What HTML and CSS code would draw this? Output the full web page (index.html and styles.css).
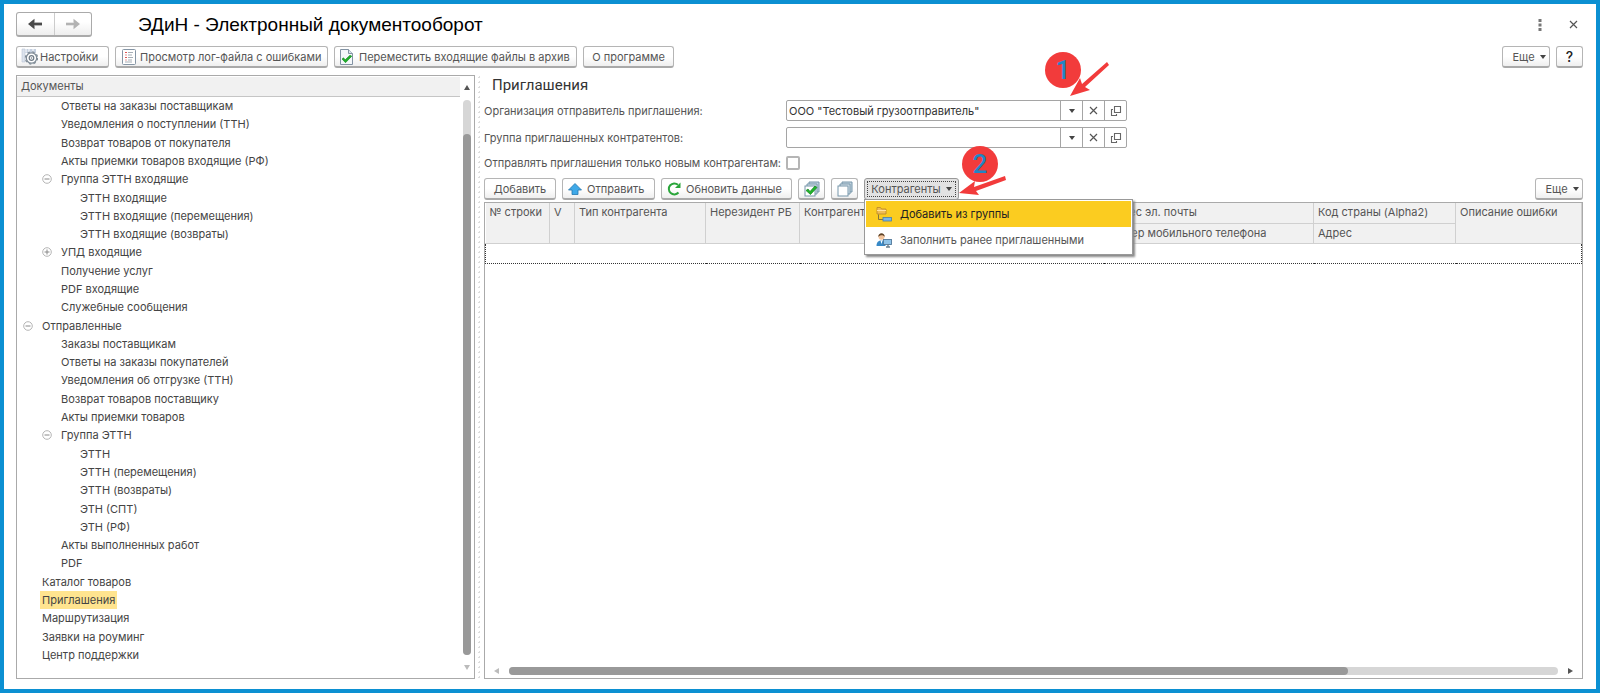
FILE: index.html
```html
<!DOCTYPE html>
<html lang="ru">
<head>
<meta charset="utf-8">
<title>ЭДиН - Электронный документооборот</title>
<link rel="stylesheet" href="styles.css">
</head>
<body>
<svg class="defs" width="0" height="0" aria-hidden="true">
  <symbol id="close" viewBox="0 0 9 9"><path d="M1 1l7 7M8 1l-7 7" fill="none" stroke="#555" stroke-width="1.2"/></symbol>
  <symbol id="open" viewBox="0 0 12 12"><path d="M4.500 1.500h6v6h-6zM3 4.500H1.500v6h5V9" fill="none" stroke="#666" stroke-width="1.1"/></symbol>
  <symbol id="minus" viewBox="0 0 10 10"><circle cx="5" cy="5" r="4.300" fill="#fff" stroke="#b5b5b5"/><path d="M2.500 5h5" stroke="#888"/></symbol>
  <symbol id="plus" viewBox="0 0 10 10"><circle cx="5" cy="5" r="4.300" fill="#fff" stroke="#b5b5b5"/><path d="M2.500 5h5M5 2.500v5" stroke="#888"/></symbol>
  <symbol id="caret" viewBox="0 0 6 4"><path d="M0 0h6L3 4z" fill="#444"/></symbol>
</svg>
<div class="window">
  <header class="titlebar">
    <div class="nav">
      <button type="button" aria-label="Назад"><svg width="16" height="12" viewBox="0 0 16 12"><path d="M15 6H4" stroke="#4a4a4a" stroke-width="2.800"/><path d="M7.500 .8L1 6l6.500 5.200V7.500L5 6l2.500-1.500z" fill="#4a4a4a"/></svg></button>
      <button type="button" aria-label="Вперед"><svg width="16" height="12" viewBox="0 0 16 12"><path d="M1 6h11" stroke="#b3b3b3" stroke-width="2.600"/><path d="M8.500 .8L15 6l-6.500 5.200V7.500L11 6 8.500 4.500z" fill="#b3b3b3"/></svg></button>
    </div>
    <h1>ЭДиН - Электронный документооборот</h1>
    <div class="winctl">
      <button type="button" aria-label="Меню"><svg width="4" height="12" viewBox="0 0 4 12"><path d="M.5 0h3v3h-3zM.5 4.500h3v3h-3zM.5 9h3v3h-3z" fill="#777"/></svg></button>
      <button type="button" aria-label="Закрыть"><svg width="9" height="9"><use href="#close"/></svg></button>
    </div>
  </header>

  <div class="toolbar main-tools">
    <button type="button" class="btn icon-btn settings">
      <svg width="17" height="17" viewBox="0 0 17 17"><path d="M1 1h14v4H1z" fill="#c5d0e0"/><path d="M1 1h3v13H1z" fill="#dce3ed" stroke="#b8c4d4" stroke-width=".6"/><path d="M5 .5v4M8 .5v4M12 .5v4" stroke="#fff"/><circle cx="10.500" cy="10" r="5.200" fill="#fff" stroke="#7f8b96" stroke-width="1.300"/><circle cx="10.500" cy="10" r="6.100" fill="none" stroke="#7f8b96" stroke-width="1.200" stroke-dasharray="2.400 2.390"/><circle cx="10.500" cy="10" r="2.300" fill="none" stroke="#6f7b86" stroke-width="1.200"/><circle cx="10.500" cy="10" r=".8" fill="#6f7b86"/></svg>
      Настройки</button>
    <button type="button" class="btn icon-btn log">
      <svg width="14" height="16" viewBox="0 0 14 16"><rect x=".5" y=".5" width="13" height="15" rx="1" fill="#fff" stroke="#8595a5"/><path d="M3 3.500h2M3 8.500h2" stroke="#e05555"/><path d="M3 6h2M3 11h2" stroke="#e59a9a"/><path d="M6 3.500h5M6 6h4M6 8.500h5M6 11h4M3 13h7" stroke="#a5adb5"/></svg>
      Просмотр лог-файла с ошибками</button>
    <button type="button" class="btn icon-btn move">
      <svg width="13" height="16" viewBox="0 0 13 16"><path d="M.5 .5h8l4 4v11H.5z" fill="#f4f7fa" stroke="#8292a3"/><path d="M8.500 .5v4h4" fill="#dbe3eb" stroke="#8292a3"/><path d="M2 10l1.500-1.200 1.700 2 4.800-4.600 1.800 1-6.300 6.500z" fill="#20ad2b" stroke="#138a1c" stroke-width=".6"/></svg>
      Переместить входящие файлы в архив</button>
    <button type="button" class="btn about">О программе</button>
    <span class="spacer"></span>
    <button type="button" class="btn more">Еще <svg width="6" height="4"><use href="#caret"/></svg></button>
    <button type="button" class="btn help">?</button>
  </div>

  <div class="workspace">
    <nav class="tree" aria-label="Документы">
      <div class="tree-body">
        <div class="tree-head">Документы</div>
        <ul>
          <li class="l2"><a href="#">Ответы на заказы поставщикам</a></li>
          <li class="l2"><a href="#">Уведомления о поступлении (ТТН)</a></li>
          <li class="l2"><a href="#">Возврат товаров от покупателя</a></li>
          <li class="l2"><a href="#">Акты приемки товаров входящие (РФ)</a></li>
          <li class="l2 node"><svg width="10" height="10"><use href="#minus"/></svg><a href="#">Группа ЭТТН входящие</a></li>
          <li class="l3"><a href="#">ЭТТН входящие</a></li>
          <li class="l3"><a href="#">ЭТТН входящие (перемещения)</a></li>
          <li class="l3"><a href="#">ЭТТН входящие (возвраты)</a></li>
          <li class="l2 node"><svg width="10" height="10"><use href="#plus"/></svg><a href="#">УПД входящие</a></li>
          <li class="l2"><a href="#">Получение услуг</a></li>
          <li class="l2"><a href="#">PDF входящие</a></li>
          <li class="l2"><a href="#">Служебные сообщения</a></li>
          <li class="l1 node"><svg width="10" height="10"><use href="#minus"/></svg><a href="#">Отправленные</a></li>
          <li class="l2"><a href="#">Заказы поставщикам</a></li>
          <li class="l2"><a href="#">Ответы на заказы покупателей</a></li>
          <li class="l2"><a href="#">Уведомления об отгрузке (ТТН)</a></li>
          <li class="l2"><a href="#">Возврат товаров поставщику</a></li>
          <li class="l2"><a href="#">Акты приемки товаров</a></li>
          <li class="l2 node"><svg width="10" height="10"><use href="#minus"/></svg><a href="#">Группа ЭТТН</a></li>
          <li class="l3"><a href="#">ЭТТН</a></li>
          <li class="l3"><a href="#">ЭТТН (перемещения)</a></li>
          <li class="l3"><a href="#">ЭТТН (возвраты)</a></li>
          <li class="l3"><a href="#">ЭТН (СПТ)</a></li>
          <li class="l3"><a href="#">ЭТН (РФ)</a></li>
          <li class="l2"><a href="#">Акты выполненных работ</a></li>
          <li class="l2"><a href="#">PDF</a></li>
          <li class="l1"><a href="#">Каталог товаров</a></li>
          <li class="l1"><a href="#" class="current">Приглашения</a></li>
          <li class="l1"><a href="#">Маршрутизация</a></li>
          <li class="l1"><a href="#">Заявки на роуминг</a></li>
          <li class="l1"><a href="#">Центр поддержки</a></li>
        </ul>
      </div>
      <div class="vscroll">
        <svg width="6" height="5" viewBox="0 0 6 5"><path d="M3 0l3 5H0z" fill="#555"/></svg>
        <div class="vtrack"><div class="vthumb"></div></div>
        <svg width="6" height="5" viewBox="0 0 6 5"><path d="M0 0h6L3 5z" fill="#bbb"/></svg>
      </div>
    </nav>
    <div class="splitter"></div>
    <main class="content">
      <h2>Приглашения</h2>
      <div class="field">
        <label for="org">Организация отправитель приглашения:</label>
        <div class="combo">
          <input id="org" type="text" value="ООО &quot;Тестовый грузоотправитель&quot;">
          <button type="button" aria-label="Выбрать"><svg width="6" height="4"><use href="#caret"/></svg></button>
          <button type="button" aria-label="Очистить"><svg width="9" height="9"><use href="#close"/></svg></button>
          <button type="button" aria-label="Открыть"><svg width="12" height="12"><use href="#open"/></svg></button>
          <span class="badge one">1</span>
          <svg class="arrow-one" width="40" height="36" viewBox="0 0 40 36"><path d="M0 34L10 16l2 6L37 0l2 3L15 25l5 3z" fill="#f23b3b"/></svg>
        </div>
      </div>
      <div class="field">
        <label for="group">Группа приглашенных контратентов:</label>
        <div class="combo">
          <input id="group" type="text">
          <button type="button" aria-label="Выбрать"><svg width="6" height="4"><use href="#caret"/></svg></button>
          <button type="button" aria-label="Очистить"><svg width="9" height="9"><use href="#close"/></svg></button>
          <button type="button" aria-label="Открыть"><svg width="12" height="12"><use href="#open"/></svg></button>
        </div>
      </div>
      <div class="field check">
        <label for="only">Отправлять приглашения только новым контрагентам:</label>
        <input id="only" type="checkbox">
      </div>
      <div class="toolbar">
        <button type="button" class="btn add">Добавить</button>
        <button type="button" class="btn icon-btn send">
          <svg width="14" height="12" viewBox="0 0 14 12"><path d="M7 .5L13.500 7H10v4.500H4V7H.5z" fill="#3fa9e8" stroke="#2577ae" stroke-width=".8"/></svg>
          Отправить</button>
        <button type="button" class="btn icon-btn refresh">
          <svg width="14" height="14" viewBox="0 0 14 14"><path d="M11.500 10.500A5.500 5.500 0 1 1 11 2.800" fill="none" stroke="#2aa63b" stroke-width="2"/><path d="M13.500 .5v5.500H8z" fill="#2aa63b"/></svg>
          Обновить данные</button>
        <button type="button" class="btn square" aria-label="Отметить все"><svg width="16" height="16" viewBox="0 0 16 16"><path d="M5 4V1h10v10h-3" fill="#c2d3df" stroke="#7696aa"/><path d="M3 5V3h10v10h-2" fill="#dce7ee" stroke="#7696aa"/><rect x="1" y="5" width="10" height="10" fill="#fff" stroke="#7696aa"/><path d="M2 9.500l2-1.500 2 2.500L11 5l2 1.500-6.500 7z" fill="#20b32b" stroke="#12841c" stroke-width=".7"/></svg></button>
        <button type="button" class="btn square" aria-label="Снять отметки"><svg width="16" height="16" viewBox="0 0 16 16"><path d="M5 4V1h10v10h-3" fill="#c2d3df" stroke="#7696aa"/><path d="M3 5V3h10v10h-2" fill="#dce7ee" stroke="#7696aa"/><rect x="1" y="5" width="10" height="10" fill="#fff" stroke="#7696aa"/></svg></button>
        <div class="dropdown">
          <button type="button" class="btn pressed" aria-expanded="true"><span>Контрагенты</span><svg width="6" height="4"><use href="#caret"/></svg></button>
          <div class="menu">
            <button type="button" class="active"><svg width="16" height="16" viewBox="0 0 16 16"><path d="M1 8V1.500h3.500l1 1.500H10v5z" fill="#f0bd55" stroke="#b88528" stroke-width=".8"/><path d="M1 4.500h9" stroke="#ffe2a0"/><path d="M2.500 8.500v5H7" fill="none" stroke="#83733d"/><rect x="7" y="11.500" width="8.500" height="3.500" fill="#79b5e6" stroke="#4a7ea9" stroke-width=".8"/></svg>Добавить из группы</button>
            <button type="button"><svg width="16" height="16" viewBox="0 0 16 16"><path d="M.5 14c0-4 2-5.500 5-5.500s4 1.500 4 5.500z" fill="#3889c7"/><path d="M4.500 8.500h2L5.500 12z" fill="#fff"/><circle cx="5.500" cy="4.800" r="3" fill="#f2c49c"/><path d="M2.300 5C2 0 9 0 8.700 5 7.500 2.800 4 2.800 2.300 5z" fill="#5f4328"/><rect x="7.500" y="7.500" width="8" height="5" fill="#8fc3e8" stroke="#52799a" stroke-width=".9"/><path d="M10 15h4M12 12.500V15" stroke="#6b7f8e" stroke-width="1.400"/></svg>Заполнить ранее приглашенными</button>
          </div>
          <span class="badge two">2</span>
          <svg class="arrow-two" width="48" height="20" viewBox="0 0 48 20"><path d="M0 17L16 5l-1 6L46 0l1 4L17 15l3 4z" fill="#f23b3b"/></svg>
        </div>
        <span class="spacer"></span>
        <button type="button" class="btn more">Еще <svg width="6" height="4"><use href="#caret"/></svg></button>
      </div>
      <div class="grid">
        <table>
          <colgroup><col class="c-num"><col class="c-v"><col class="c-type"><col class="c-res"><col><col class="c-mail"><col class="c-code"><col class="c-err"></colgroup>
          <thead>
            <tr><th rowspan="2">№ строки</th><th rowspan="2">V</th><th rowspan="2">Тип контрагента</th><th rowspan="2">Нерезидент РБ</th><th rowspan="2">Контрагент</th><th>Адрес эл. почты</th><th>Код страны (Alpha2)</th><th rowspan="2">Описание ошибки</th></tr>
            <tr><th>Номер мобильного телефона</th><th>Адрес</th></tr>
          </thead>
          <tbody><tr><td colspan="8"></td></tr></tbody>
        </table>
        <div class="hscroll">
          <svg width="5" height="6" viewBox="0 0 5 6"><path d="M5 0v6L0 3z" fill="#bbb"/></svg>
          <div class="htrack"><div class="hthumb"></div></div>
          <svg width="5" height="6" viewBox="0 0 5 6"><path d="M0 0v6l5-3z" fill="#555"/></svg>
        </div>
      </div>
    </main>
  </div>
</div>
</body>
</html>
```
FILE: styles.css
```css
* { box-sizing: border-box; }
body { margin: 0; font-family: Inter, Roboto, sans-serif; font-size: 11px; line-height: 14px; color: #555; background: #fff; }
button, input { font: inherit; color: inherit; margin: 0; }
button { padding: 0; border: 0; background: none; cursor: pointer; }
svg { display: block; flex: none; }
.defs { position: absolute; }
h1, h2, ul { margin: 0; padding: 0; }

.window { min-height: 100vh; display: flex; flex-direction: column; border: 4px solid #0c90d2; padding: 8px 13px 10px 12px; }
.titlebar { display: flex; align-items: center; height: 25px; }
.nav { display: flex; width: 76px; height: 25px; border: 1px solid #aaa; border-bottom: 2px solid #aaa; border-radius: 3px; background: linear-gradient(#fff 40%, #eee); }
.nav button { flex: 1; display: flex; align-items: center; justify-content: center; }
.nav button + button { border-left: 1px solid #ccc; }
h1 { margin-left: 46px; font: 400 19px/24px "Liberation Sans", Arial, sans-serif; color: #000; }
.winctl { margin-left: auto; display: flex; align-items: center; gap: 27px; padding-right: 5px; }

.toolbar { display: flex; align-items: center; gap: 6px; }
.main-tools { margin-top: 9px; }
.spacer { flex: 1; }
.btn { display: flex; align-items: center; justify-content: center; height: 22px; padding: 0 8px; border: 1px solid #b5b5b5; border-bottom: 2px solid #a9a9a9; border-radius: 3px; background: linear-gradient(#fff 50%, #efefef); white-space: nowrap; }
.icon-btn { gap: 4px; padding: 0 0 0 4px; justify-content: flex-start; }
.settings { width: 93px; gap: 2px; }
.log { width: 213px; padding-left: 6px; }
.move { width: 243px; padding-left: 5px; gap: 6px; }
.about { width: 91px; }
.add { width: 72px; }
.send { width: 93px; padding-left: 5px; gap: 5px; }
.refresh { width: 131px; padding-left: 5px; gap: 5px; }
.more { width: 48px; gap: 5px; padding: 0 2px 0 8px; }
.help { width: 27px; color: #222; font-size: 14px; font-weight: 500; }
.square { width: 27px; padding: 0; }

.workspace { flex: 1; display: flex; margin-top: 7px; }
.tree { flex: none; width: 459px; display: flex; border: 1px solid #aaa; }
.tree-body { flex: 1; display: flex; flex-direction: column; padding: 1px 0 14px 0; }
.tree-head { height: 20px; padding: 2px 4px; background: #f1f1f1; border-bottom: 1px solid #c5c5c5; }
.tree ul { flex: 1; display: grid; grid-auto-rows: 1fr; list-style: none; color: #444; }
.tree li { display: flex; align-items: center; }
.tree a { color: inherit; text-decoration: none; padding: 2px; }
.tree .current { background: #ffe48f; }
.l1 { padding-left: 23px; }
.l2 { padding-left: 42px; }
.l3 { padding-left: 61px; }
.l1.node { padding-left: 6px; }
.l2.node { padding-left: 25px; }
.node svg { margin-right: 7px; }
.vscroll { width: 14px; display: flex; flex-direction: column; align-items: center; gap: 10px; padding: 9px 0 8px; }
.vtrack { flex: 1; width: 8px; border-radius: 4px; background: #d6d6d6; padding-top: 34px; }
.vthumb { height: 100%; border-radius: 4px; background: #999; }
.splitter { flex: none; width: 9px; background: radial-gradient(circle, #ddd 1px, transparent 1px) center top / 9px 5px repeat-y; }

.content { flex: 1; min-width: 0; display: flex; flex-direction: column; }
h2 { padding-left: 8px; margin-bottom: 5px; font: 400 15px/20px Roboto, sans-serif; color: #333; }
.field { display: flex; align-items: center; height: 21px; margin-bottom: 6px; }
.field label { flex: none; width: 302px; white-space: nowrap; }
.combo { position: relative; display: flex; width: 341px; height: 21px; border: 1px solid #a5a5a5; border-radius: 2px; background: #fff; }
.combo input { flex: 1; min-width: 0; border: 0; padding: 0 2px; background: none; color: #333; outline: 0; }
.combo button { width: 22px; border-left: 1px solid #a5a5a5; display: flex; align-items: center; justify-content: center; }
.field.check { height: 18px; }
.check input { appearance: none; width: 14px; height: 14px; border: 2px solid #b5b5b5; border-radius: 2px; background: #fff; }

.dropdown { position: relative; z-index: 2; }
.pressed { width: 95px; padding: 1px 2px; gap: 5px; border: 1px solid #999; background: #e2e2e2; outline: 1px dotted #444; outline-offset: -4px; }
.menu { position: absolute; left: 0; top: 21px; width: 269px; padding: 1px; border: 1px solid #999; background: #fff; box-shadow: 2px 2px 2px #888; }
.menu button { display: flex; align-items: center; gap: 8px; width: 100%; height: 26px; padding-left: 10px; }
.menu .active { background: #fbcc20; color: #222; }
.badge { position: absolute; z-index: 3; width: 36px; height: 36px; border-radius: 50%; background: #f23b3b; color: #2185c5; font: 500 26px/36px Roboto, sans-serif; text-align: center; }
.one { right: 45px; top: -49px; }
.two { left: 98px; top: -32px; }
.arrow-one { position: absolute; right: 16px; top: -39px; z-index: 4; }
.arrow-two { position: absolute; left: 95px; top: -2px; z-index: 4; }

.grid { flex: 1; display: flex; flex-direction: column; margin-top: 2px; border: 1px solid #aaa; }
table { width: 100%; table-layout: fixed; border-collapse: collapse; }
.c-num { width: 64px; }
.c-v { width: 25px; }
.c-type { width: 131px; }
.c-res { width: 94px; }
.c-mail { width: 210px; }
.c-code { width: 142px; }
.c-err { width: 126px; }
th { height: 20px; padding: 2px 4px 3px; vertical-align: top; text-align: left; font-weight: 400; white-space: nowrap; background: #f1f1f1; border: 1px solid #d0d0d0; border-top: 0; }
th:first-child { border-left: 0; }
td { height: 20px; padding: 0; border: 1px dotted #333; }
.hscroll { margin-top: auto; display: flex; align-items: center; gap: 10px; padding: 0 9px 3px; }
.htrack { flex: 1; height: 8px; border-radius: 4px; background: #d6d6d6; }
.hthumb { width: 80%; height: 8px; border-radius: 4px; background: #999; }
```
